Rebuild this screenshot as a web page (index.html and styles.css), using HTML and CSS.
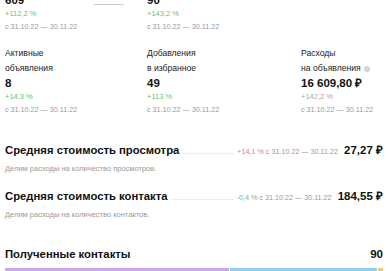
FILE: index.html
```html
<!DOCTYPE html>
<html lang="ru">
<head>
    <meta charset="UTF-8">
    <meta name="viewport" content="width=device-width, initial-scale=1.0">
    <title>Статистика</title>
    <link rel="stylesheet" href="styles.css">
</head>
<body>
    <div class="page">
        <div class="stats">
            <div class="stat">
                <div class="label">Просмотры</div>
                <div class="value">609 <span class="spark"></span></div>
                <div class="change up">+112,2 %</div>
                <div class="period">с 31.10.22 — 30.11.22</div>
            </div>
            <div class="stat">
                <div class="label">Контакты</div>
                <div class="value">90</div>
                <div class="change up">+143,2 %</div>
                <div class="period">с 31.10.22 — 30.11.22</div>
            </div>
            <div class="stat"></div>

            <div class="stat">
                <div class="label">Активные<br>объявления</div>
                <div class="value">8</div>
                <div class="change up">+14,3 %</div>
                <div class="period">с 31.10.22 — 30.11.22</div>
            </div>
            <div class="stat">
                <div class="label">Добавления<br>в избранное</div>
                <div class="value">49</div>
                <div class="change up">+113 %</div>
                <div class="period">с 31.10.22 — 30.11.22</div>
            </div>
            <div class="stat">
                <div class="label">Расходы<br>на объявления <span class="info"></span></div>
                <div class="value">16 609,80 ₽</div>
                <div class="change">+142,2 %</div>
                <div class="period">с 31.10.22 — 30.11.22</div>
            </div>
        </div>

        <div class="cost">
            <div class="cost-row">
                <h2>Средняя стоимость просмотра</h2>
                <span class="leader"></span>
                <span class="meta"><span class="down">+14,1 %</span> с 31.10.22 — 30.11.22</span>
                <span class="cost-value">27,27 ₽</span>
            </div>
            <div class="desc">Делим расходы на количество просмотров.</div>
        </div>

        <div class="cost">
            <div class="cost-row">
                <h2>Средняя стоимость контакта</h2>
                <span class="leader"></span>
                <span class="meta"><span class="up">-0,4 %</span> с 31.10.22 — 30.11.22</span>
                <span class="cost-value">184,55 ₽</span>
            </div>
            <div class="desc">Делим расходы на количество контактов.</div>
        </div>

        <div class="contacts">
            <div class="contacts-head">
                <h2>Полученные контакты</h2>
                <span class="cost-value">90</span>
            </div>
            <div class="bar">
                <div class="seg seg-chat" style="width: 59.7%"></div>
                <div class="seg seg-call" style="width: 38.9%"></div>
                <div class="seg seg-other" style="width: 1.4%"></div>
            </div>
        </div>
    </div>
</body>
</html>
```
FILE: styles.css
```css
body {
    font-family: 'Liberation Sans', Arial, sans-serif;
    background-color: #fff;
    color: #111;
    margin: 0;
    overflow: hidden;
}

.page {
    padding: 0 7px 0 5px;
    margin-top: -22px;
}

/* Карточки со статистикой */
.stats {
    display: grid;
    grid-template-columns: 142px 154px 1fr;
    row-gap: 13px;
}

.label {
    font-size: 8.6px;
    line-height: 15px;
    color: #222;
}

.info {
    display: inline-block;
    width: 6px;
    height: 6px;
    border-radius: 50%;
    background-color: #d4d4d4;
    margin-left: 1px;
    vertical-align: -1px;
}

.value {
    font-size: 11.5px;
    font-weight: bold;
    line-height: 14px;
}

.spark {
    display: inline-block;
    width: 30px;
    height: 1px;
    background-color: #ccc;
    margin-left: 67px;
    vertical-align: -1px;
}

.change {
    font-size: 7.5px;
    line-height: 14px;
    color: #aaa;
}

.period {
    font-size: 7.2px;
    line-height: 12px;
    color: #999;
}

.up {
    color: #6cc070;
}

.down {
    color: #e57d7d;
}

/* Средняя стоимость */
.cost {
    margin-bottom: 13px;
}

.stats + .cost {
    margin-top: 26px;
}

.cost-row,
.contacts-head {
    display: flex;
    align-items: baseline;
    line-height: 16px;
}

h2 {
    font-size: 11.3px;
    font-weight: bold;
    margin: 0;
}

.leader {
    flex: 1;
    border-bottom: 1px dotted #ddd;
    margin: 0 4px;
}

.meta {
    font-size: 7.2px;
    color: #999;
    margin-right: 6px;
}

.cost-value {
    font-size: 11.5px;
    font-weight: bold;
}

.desc {
    font-size: 7.5px;
    line-height: 12px;
    color: #999;
    margin-top: 3px;
}

/* Полученные контакты */
.contacts {
    margin-top: 25px;
}

.contacts-head {
    justify-content: space-between;
}

.bar {
    display: flex;
    gap: 1px;
    margin-top: 6px;
    height: 3px;
}

.seg-chat {
    background-color: #c9a6e6;
}

.seg-call {
    background-color: #8ed0ec;
}

.seg-other {
    background-color: #f3c77e;
}
```
